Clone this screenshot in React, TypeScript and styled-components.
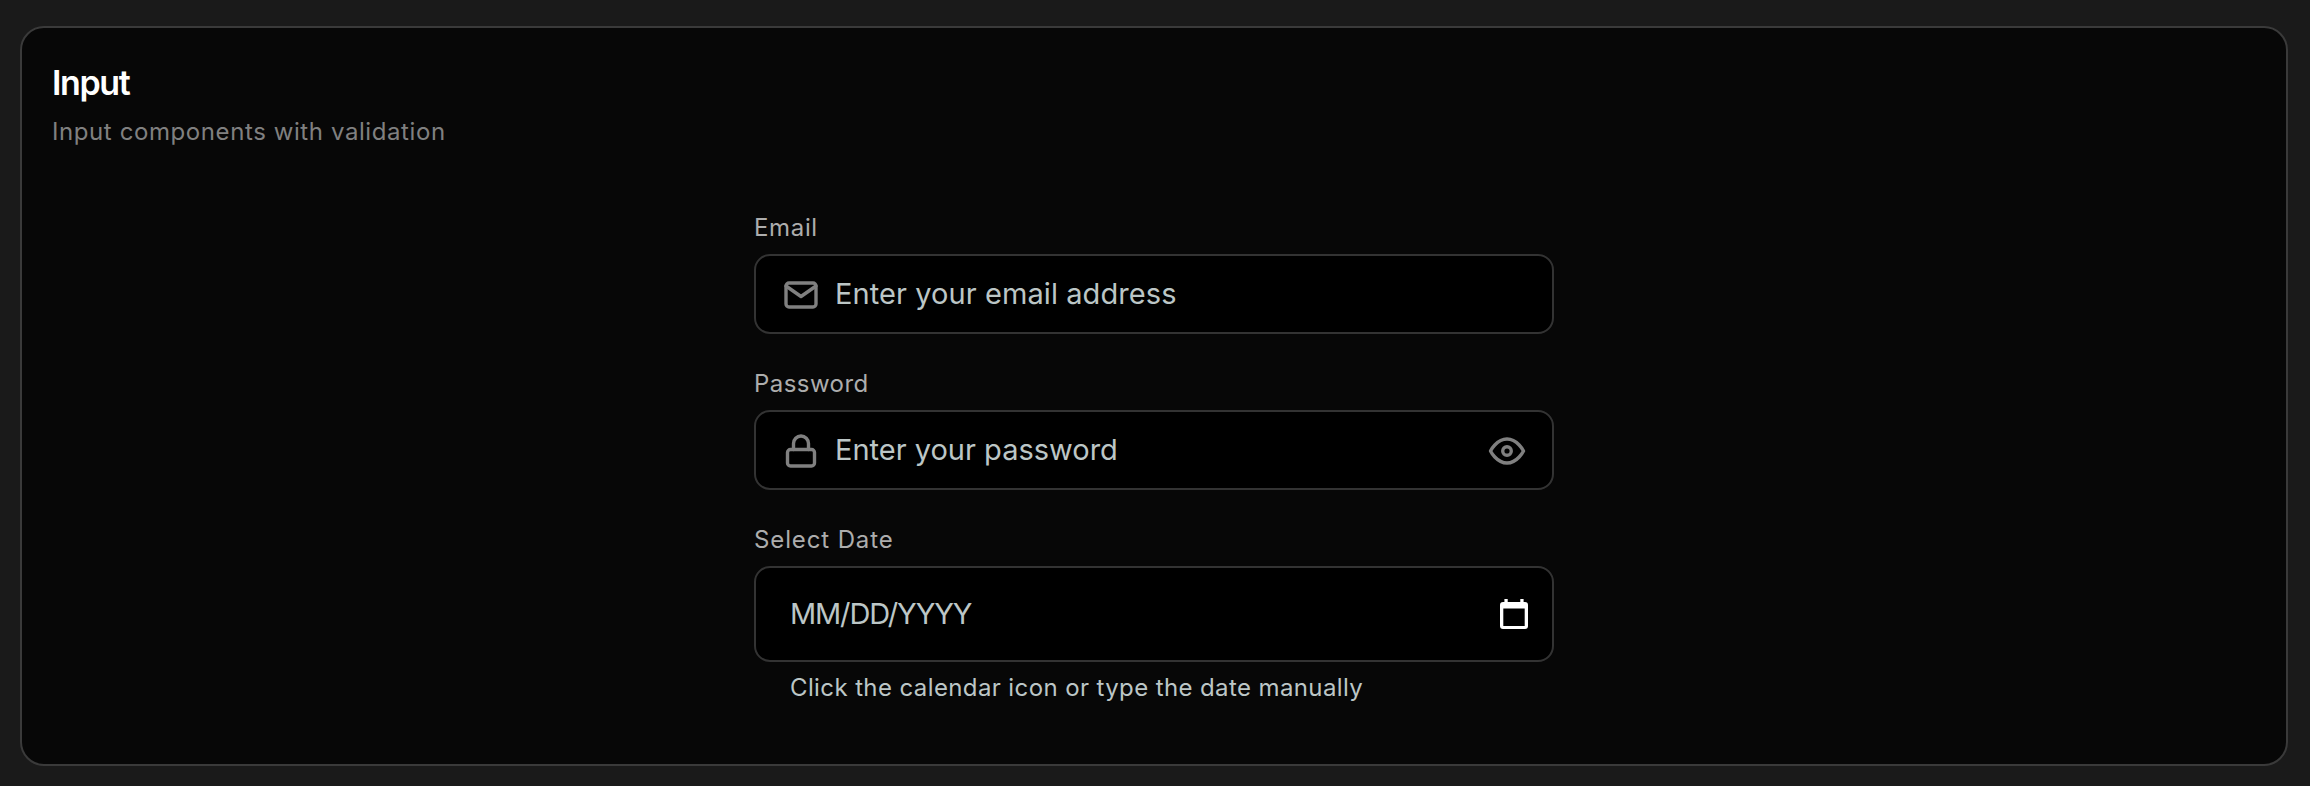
import React from 'react';
import styled, { createGlobalStyle } from 'styled-components';

const GlobalStyle = createGlobalStyle`
  *, *::before, *::after { box-sizing: border-box; }
  body {
    margin: 0;
    background: #1a1a1a;
    font-family: Inter, "Liberation Sans", sans-serif;
    overflow: hidden;
  }
`;

const Page = styled.main`
  height: 786px;
  padding: 26px 22px 20px 20px;
`;

const Card = styled.section`
  height: 100%;
  padding: 35px 30px 0;
  border: 2px solid #3a3a3a;
  border-radius: 24px;
  background: #070707;
`;

const Title = styled.h2`
  margin: 0 0 13px;
  font-size: 34px;
  line-height: 40px;
  font-weight: 600;
  letter-spacing: -1.4px;
  color: #fff;
`;

const Subtitle = styled.p`
  margin: 0;
  font-size: 24px;
  line-height: 32px;
  letter-spacing: 0.59px;
  color: #808080;
`;

const Form = styled.form`
  display: flex;
  flex-direction: column;
  gap: 34px;
  width: 800px;
  margin: 64px auto 0;
`;

const Field = styled.div`
  display: flex;
  flex-direction: column;
`;

const Label = styled.label<{ $tracking: number }>`
  margin-bottom: 10px;
  font-size: 24px;
  line-height: 32px;
  letter-spacing: ${p => p.$tracking}px;
  color: #adadad;
`;

const InputBox = styled.div<{ $tall?: boolean }>`
  display: flex;
  align-items: center;
  gap: 16px;
  height: ${p => (p.$tall ? 96 : 80)}px;
  padding: ${p => (p.$tall ? '0 24px 0 34px' : '0 27px')};
  border: 2px solid #333;
  border-radius: 16px;
  background: #000;
`;

const Placeholder = styled.span<{ $tracking: number }>`
  flex: 1;
  font-size: 29px;
  line-height: 40px;
  letter-spacing: ${p => p.$tracking}px;
  color: #bcc6c6;
`;

const Hint = styled.p`
  margin: 10px 0 0;
  padding-left: 36px;
  font-size: 24px;
  line-height: 32px;
  letter-spacing: 0.39px;
  color: #bcc6c6;
`;

const LineIcon = styled.svg.attrs({ viewBox: '0 0 24 24' })`
  width: 36px;
  height: 36px;
  margin-top: 2px;
  overflow: visible;
  fill: none;
  stroke: #808080;
  stroke-width: 2.25;
  stroke-linecap: round;
  stroke-linejoin: round;
`;

const CalendarIcon = styled.svg.attrs({ viewBox: '0 0 28 30' })`
  width: 28px;
  height: 30px;
  fill: #fff;
`;

export default function App() {
  return (
    <Page>
      <GlobalStyle />
      <Card>
        <Title>Input</Title>
        <Subtitle>Input components with validation</Subtitle>
        <Form>
          <Field>
            <Label $tracking={0.65}>Email</Label>
            <InputBox>
              <LineIcon>
                <path d="M4 4h16c1.1 0 2 .9 2 2v12c0 1.1-.9 2-2 2H4c-1.1 0-2-.9-2-2V6c0-1.1.9-2 2-2z" />
                <polyline points="22,6 12,13 2,6" />
              </LineIcon>
              <Placeholder $tracking={0.08}>Enter your email address</Placeholder>
            </InputBox>
          </Field>
          <Field>
            <Label $tracking={0.45}>Password</Label>
            <InputBox>
              <LineIcon>
                <rect x="3" y="11" width="18" height="11" rx="2" />
                <path d="M7 11V7a5 5 0 0 1 10 0v4" />
              </LineIcon>
              <Placeholder $tracking={0}>Enter your password</Placeholder>
              <LineIcon>
                <path d="M1 12s4-8 11-8 11 8 11 8-4 8-11 8-11-8-11-8z" />
                <circle cx="12" cy="12" r="2.85" />
              </LineIcon>
            </InputBox>
          </Field>
          <Field>
            <Label $tracking={0.88}>Select Date</Label>
            <InputBox $tall>
              <Placeholder $tracking={-1.15}>MM/DD/YYYY</Placeholder>
              <CalendarIcon>
                <path
                  fillRule="evenodd"
                  d="M4.4 0h3.3v3h12.6V0h3.3v3H25a3 3 0 0 1 3 3v21a3 3 0 0 1-3 3H3a3 3 0 0 1-3-3V6a3 3 0 0 1 3-3h1.4zM3.3 9.5V27h21.4V9.5z"
                />
              </CalendarIcon>
            </InputBox>
            <Hint>Click the calendar icon or type the date manually</Hint>
          </Field>
        </Form>
      </Card>
    </Page>
  );
}
